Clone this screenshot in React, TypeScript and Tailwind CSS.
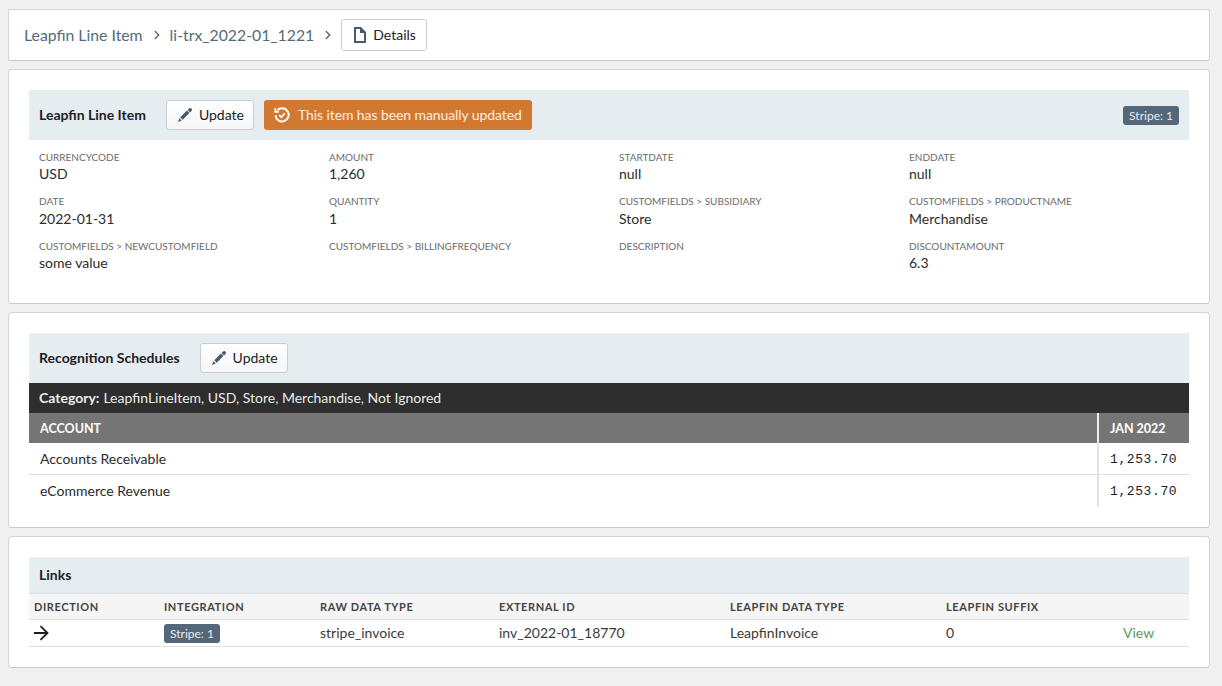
import { ChevronRight, ArrowRight } from "lucide-react";

const fields = [
  ["CURRENCYCODE", "USD"],
  ["AMOUNT", "1,260"],
  ["STARTDATE", "null"],
  ["ENDDATE", "null"],
  ["DATE", "2022-01-31"],
  ["QUANTITY", "1"],
  ["CUSTOMFIELDS > SUBSIDIARY", "Store"],
  ["CUSTOMFIELDS > PRODUCTNAME", "Merchandise"],
  ["CUSTOMFIELDS > NEWCUSTOMFIELD", "some value"],
  ["CUSTOMFIELDS > BILLINGFREQUENCY", ""],
  ["DESCRIPTION", ""],
  ["DISCOUNTAMOUNT", "6.3"],
];

const linkCols = "grid grid-cols-[130px_156px_179px_231px_216px_177px_1fr]";

function EditIcon() {
  return (
    <svg width="16" height="16" viewBox="0 0 16 16" fill="#465a6b">
      <path d="M3.25 10.26l2.47 2.47 6.69-6.69-2.46-2.47-6.7 6.69zM.99 14.99l3.86-1.39-2.46-2.44-1.4 3.83zm12.25-14c-.48 0-.92.2-1.24.51l-1.44 1.44 2.47 2.47 1.44-1.44c.32-.32.51-.75.51-1.24.01-.95-.77-1.74-1.74-1.74z" />
    </svg>
  );
}

function UpdateButton() {
  return (
    <button className="flex h-[30px] items-center gap-[6px] rounded-[3px] border border-[#c9ced3] bg-gradient-to-b from-white to-[#f4f6f8] pl-[10px] pr-[9px] text-[14px] text-[#1c2127]">
      <EditIcon />
      <span className="pb-[2px]">Update</span>
    </button>
  );
}

function Badge() {
  return (
    <span className="rounded-[3px] bg-[#53667a] px-[6px] py-[2px] text-[12px] leading-[16px] text-[#e8edf1]">
      Stripe: 1
    </span>
  );
}

export default function App() {
  return (
    <div className="flex min-h-screen flex-col gap-2 bg-[#f0f0f0] pb-[18px] pl-2 pr-3 pt-[9px] font-['Lato','Open_Sans',sans-serif] text-[#1c2127]">
      {/* Breadcrumbs */}
      <div className="flex h-[52px] items-center rounded-[2px] border border-[#d4d4d4] border-b-[#c9c9c9] bg-white pl-[15px] text-[15.8px] text-[#56697c]">
        <span className="pb-[1px]">Leapfin Line Item</span>
        <ChevronRight size={14} strokeWidth={2.5} className="ml-[7px] mr-[6px] text-[#56697c]" />
        <span className="pb-[1px]">li-trx_2022-01_1221</span>
        <ChevronRight size={14} strokeWidth={2.5} className="ml-[7px] mr-[6px] text-[#56697c]" />
        <button className="flex h-[32px] items-center gap-[5px] rounded-[3px] border border-[#c9ced3] bg-white px-[10px] text-[14px] text-[#1c2127]">
          <svg width="16" height="16" viewBox="0 0 16 16" fill="#465a6b">
            <path d="M9 0H3c-.55 0-1 .45-1 1v14c0 .55.45 1 1 1h10c.55 0 1-.45 1-1V5l-5-5zm3 14H4V2h4v4h4v8z" />
          </svg>
          <span className="pb-[1px]">Details</span>
        </button>
      </div>

      {/* Line item */}
      <div className="h-[235px] rounded-[4px] border border-[#d4d4d4] border-b-[#c9c9c9] bg-white px-5 pt-5">
        <div className="flex h-[50px] items-center bg-[#e6edf1] px-[10px]">
          <span className="mr-5 pb-[2px] text-[14px] font-bold">Leapfin Line Item</span>
          <UpdateButton />
          <div className="ml-[10px] flex h-[30px] items-center gap-[8px] rounded-[3px] bg-[#d27931] px-[10px] text-[14px] tracking-[-0.09px] text-[#fbeee2]">
            <svg width="16" height="16" viewBox="0 0 16 16" fill="none" stroke="white" strokeWidth="2">
              <path d="M3.4 3.2A6.6 6.6 0 1 1 1.5 8.3" />
              <path d="M1.3 1.2v3.6h3.6" strokeWidth="1.8" />
              <path d="M5.2 8l2.1 2.2 3.6-4" strokeWidth="1.7" />
            </svg>
            <span className="pb-[2px]">This item has been manually updated</span>
          </div>
          <div className="ml-auto pb-[2px]">
            <Badge />
          </div>
        </div>
        <div className="grid grid-cols-[290px_290px_290px_1fr] pl-[10px] pt-[11px]">
          {fields.map(([label, value]) => (
            <div key={label} className="h-[44.5px]">
              <div className="-mt-[0.4px] text-[10px] leading-[13.4px] text-[#6b6b6b]">{label}</div>
              <div className="text-[14px] leading-[20px] text-[#2b2b2b]">{value}</div>
            </div>
          ))}
        </div>
      </div>

      {/* Recognition schedules */}
      <div className="h-[216px] rounded-[4px] border border-[#d4d4d4] border-b-[#c9c9c9] bg-white px-5 pt-5">
        <div className="flex h-[50px] items-center bg-[#e6edf1] pl-[10px]">
          <span className="mr-5 pb-[2px] text-[14px] font-bold">Recognition Schedules</span>
          <UpdateButton />
        </div>
        <div className="flex h-[30px] items-center bg-[#2e2e2e] pb-[2px] pl-[10px] text-[14px] text-[#ececec]">
          <span className="mr-1 font-bold">Category:</span>
          LeapfinLineItem, USD, Store, Merchandise, Not Ignored
        </div>
        <div className="grid h-[30px] grid-cols-[1fr_92px] bg-[#757575] text-[12.5px] font-bold text-white">
          <div className="flex items-center pl-[11px] pt-[2px]">ACCOUNT</div>
          <div className="flex items-center border-l-2 border-[#ececec] pl-[11px] pt-[2px]">JAN 2022</div>
        </div>
        <div className="grid h-[32px] grid-cols-[1fr_92px] border-b border-[#dedede] text-[14px]">
          <div className="flex items-center pl-[11px] text-[#2b2b2b]">Accounts Receivable</div>
          <div className="flex items-center border-l-2 border-[#e3e3e3] pl-[11px] pt-[2px] font-['Liberation_Mono',monospace] text-[13px] tracking-[0.6px]">
            1,253.70
          </div>
        </div>
        <div className="grid h-[32px] grid-cols-[1fr_92px] text-[14px]">
          <div className="flex items-center pb-[1px] pl-[11px] text-[#2b2b2b]">eCommerce Revenue</div>
          <div className="flex items-center border-l-2 border-[#e3e3e3] pl-[11px] pt-[2px] font-['Liberation_Mono',monospace] text-[13px] tracking-[0.6px]">
            1,253.70
          </div>
        </div>
      </div>

      {/* Links */}
      <div className="h-[132px] rounded-[4px] border border-[#d4d4d4] border-b-[#c9c9c9] bg-white px-5 pt-5">
        <div className="flex h-[37px] items-center border-b border-[#dcdfe2] bg-[#e6edf1] pb-[2px] pl-[10px] text-[14px] font-bold">
          Links
        </div>
        <div className={`${linkCols} h-[26px] items-center border-b border-[#dedede] bg-[#f5f5f5] pl-[5px] pt-[2px] text-[11px] font-bold tracking-[0.6px] text-[#444]`}>
          <div>DIRECTION</div>
          <div>INTEGRATION</div>
          <div>RAW DATA TYPE</div>
          <div>EXTERNAL ID</div>
          <div>LEAPFIN DATA TYPE</div>
          <div>LEAPFIN SUFFIX</div>
          <div />
        </div>
        <div className={`${linkCols} h-[27px] items-center border-b border-[#dedede] pl-[5px] text-[14px] text-[#3a3a3a]`}>
          <div>
            <ArrowRight size={22} strokeWidth={2} className="-ml-[4px] text-[#1c2127]" />
          </div>
          <div className="pb-[2px]">
            <Badge />
          </div>
          <div className="pb-[2px]">stripe_invoice</div>
          <div className="pb-[2px]">inv_2022-01_18770</div>
          <div className="pb-[2px]">LeapfinInvoice</div>
          <div className="pb-[2px]">0</div>
          <div className="pb-[2px] text-[#5f9a59]">View</div>
        </div>
      </div>
    </div>
  );
}
